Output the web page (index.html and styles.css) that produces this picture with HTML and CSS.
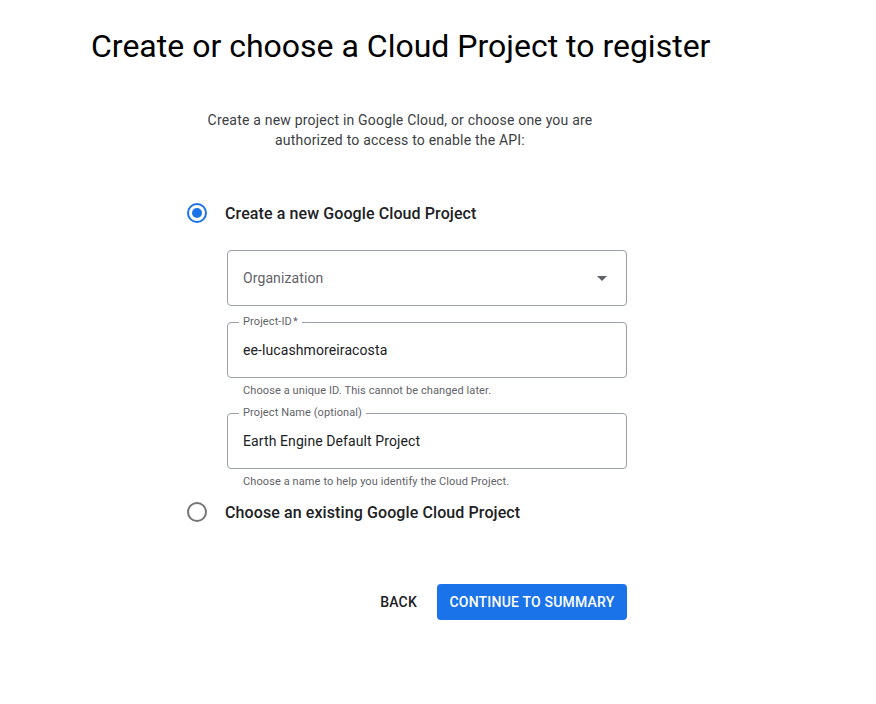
FILE: index.html
```html
<!DOCTYPE html>
<html lang="en">
<head>
<meta charset="utf-8">
<title>Create or choose a Cloud Project</title>
<link rel="stylesheet" href="styles.css">
</head>
<body>
<main class="page">
  <h1 class="title">Create or choose a Cloud Project to register</h1>
  <p class="intro">Create a new project in Google Cloud, or choose one you are<br>authorized to access to enable the API:</p>

  <div class="form">
    <label class="radio-row">
      <span class="radio checked"></span>
      <span class="radio-label">Create a new Google Cloud Project</span>
    </label>

    <div class="fields">
      <div class="field select">
        <span class="placeholder">Organization</span>
        <span class="caret"></span>
      </div>

      <div class="field-group">
        <div class="field">
          <span class="float-label">Project-ID<span class="req">*</span></span>
          <span class="value">ee-lucashmoreiracosta</span>
        </div>
        <div class="hint">Choose a unique ID. This cannot be changed later.</div>
      </div>

      <div class="field-group">
        <div class="field">
          <span class="float-label">Project Name (optional)</span>
          <span class="value">Earth Engine Default Project</span>
        </div>
        <div class="hint">Choose a name to help you identify the Cloud Project.</div>
      </div>
    </div>

    <label class="radio-row second">
      <span class="radio"></span>
      <span class="radio-label">Choose an existing Google Cloud Project</span>
    </label>

    <div class="actions">
      <button class="btn text">BACK</button>
      <button class="btn primary">CONTINUE TO SUMMARY</button>
    </div>
  </div>
</main>
</body>
</html>
```

FILE: styles.css
```css
* { box-sizing: border-box; }

body {
  margin: 0;
  background: #fff;
  font-family: Roboto, "Noto Sans", sans-serif;
  color: #202124;
}

.page {
  padding: 24px 0 0 91px;
  width: 709px;
}

.title {
  margin: 0;
  font-size: 32px;
  font-weight: 400;
  line-height: 44px;
  color: #000;
  white-space: nowrap;
}

.intro {
  margin: 42px 0 0;
  text-align: center;
  font-size: 14px;
  line-height: 20px;
  letter-spacing: 0.2px;
  color: #3c4043;
}

.form {
  margin: 51px 0 0 96px;
  width: 440px;
}

.radio-row {
  display: flex;
  align-items: center;
  gap: 18px;
  height: 24px;
}

.radio {
  width: 20px;
  height: 20px;
  border-radius: 50%;
  border: 2px solid #757575;
  display: flex;
  align-items: center;
  justify-content: center;
  flex: none;
}

.radio.checked { border-color: #1a73e8; }

.radio.checked::after {
  content: "";
  width: 10px;
  height: 10px;
  border-radius: 50%;
  background: #1a73e8;
}

.radio-label {
  font-size: 16px;
  font-weight: 500;
  letter-spacing: 0.1px;
  color: #202124;
}

.fields {
  margin: 25px 0 0 40px;
  display: flex;
  flex-direction: column;
  gap: 16px;
}

.field {
  position: relative;
  height: 56px;
  border: 1px solid #9aa0a6;
  border-radius: 4px;
  display: flex;
  align-items: center;
  padding: 0 15px;
  font-size: 14px;
  letter-spacing: 0.1px;
}

.placeholder { color: #5f6368; }

.value { color: #202124; }

.caret {
  margin-left: auto;
  margin-right: 4px;
  width: 0;
  height: 0;
  border-left: 5px solid transparent;
  border-right: 5px solid transparent;
  border-top: 5px solid #5f6368;
}

.float-label {
  position: absolute;
  left: 11px;
  top: -8px;
  padding: 0 4px;
  background: #fff;
  font-size: 11px;
  line-height: 14px;
  letter-spacing: 0.1px;
  color: #5f6368;
}

.req { margin-left: 1px; }

.hint {
  padding: 6px 0 0 16px;
  font-size: 11px;
  line-height: 13px;
  letter-spacing: 0.1px;
  color: #5f6368;
}

.radio-row.second { margin-top: 12px; }

.actions {
  margin-top: 60px;
  display: flex;
  justify-content: flex-end;
  gap: 8px;
}

.btn {
  height: 36px;
  border: 0;
  border-radius: 4px;
  font-family: Roboto, "Noto Sans", sans-serif;
  font-size: 14px;
  font-weight: 500;
  letter-spacing: 0.2px;
  padding: 0 12px;
  background: transparent;
}

.btn.text { color: #202124; }

.btn.primary {
  background: #1a73e8;
  color: #fff;
  width: 190px;
}
```
